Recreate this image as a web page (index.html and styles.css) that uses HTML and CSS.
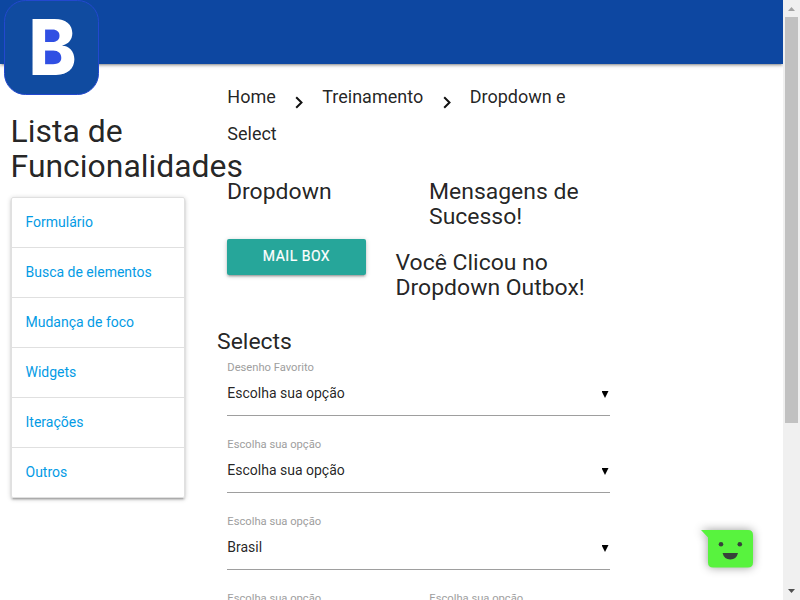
FILE: index.html
```
<!DOCTYPE html>
<html lang="pt-BR">
<head>
<meta charset="utf-8">
<title>Dropdown e Select</title>
<link rel="stylesheet" href="styles.css">
</head>
<body>
<div class="page">
  <nav class="navbar">
    <svg class="logo" width="104" height="100" viewBox="0 0 104 100">
      <rect x="4.500" y="0.500" width="94" height="94" rx="21" fill="#104ba0" stroke="#2348cf"/>
      <rect x="40" y="26" width="21" height="18" rx="6" fill="#304fe3"/>
      <rect x="40" y="48" width="24" height="19" rx="6" fill="#304fe3"/>
      <text class="logo-letter" transform="translate(28.600 75.300) scale(.94 1)">B</text>
    </svg>
  </nav>
  <div class="row">
    <aside class="side">
      <h4>Lista de Funcionalidades</h4>
      <ul class="collection">
        <li><a>Formulário</a></li>
        <li><a>Busca de elementos</a></li>
        <li><a>Mudança de foco</a></li>
        <li><a>Widgets</a></li>
        <li><a>Iterações</a></li>
        <li><a>Outros</a></li>
      </ul>
    </aside>
    <main class="content">
      <div class="crumbs"><a>Home</a><svg class="sep" width="9" height="13" viewBox="0 0 9 13"><path d="M1.2 1.2 6.5 6.5 1.2 11.8"/></svg><a>Treinamento</a><svg class="sep" width="9" height="13" viewBox="0 0 9 13"><path d="M1.2 1.2 6.5 6.5 1.2 11.8"/></svg><a>Dropdown e Select</a></div>
      <div class="demo">
        <div class="demo-left">
          <h5>Dropdown</h5>
          <a class="btn">Mail Box</a>
        </div>
        <div class="demo-right">
          <h5 class="success">Mensagens de Sucesso!</h5>
          <h5 class="result">Você Clicou no Dropdown Outbox!</h5>
        </div>
      </div>
      <h5 class="selects">Selects</h5>
      <div class="field"><label>Desenho Favorito</label><div class="select"><span>Escolha sua opção</span><i class="caret"></i></div></div>
      <div class="field"><label>Escolha sua opção</label><div class="select"><span>Escolha sua opção</span><i class="caret"></i></div></div>
      <div class="field"><label>Escolha sua opção</label><div class="select"><span>Brasil</span><i class="caret"></i></div></div>
      <div class="pair">
        <div class="field"><label>Escolha sua opção</label></div>
        <div class="field"><label>Escolha sua opção</label></div>
      </div>
    </main>
  </div>
  <svg class="chat" width="80" height="70" viewBox="0 0 80 70">
    <path d="M11 10H58Q63 10 63 15V42.500Q63 47.500 58 47.500H23Q18 47.500 18 42.500V17.500Z" fill="#58f33e"/>
    <circle cx="31" cy="24.300" r="2.300" fill="#37423a"/>
    <circle cx="49.800" cy="24.300" r="2.300" fill="#37423a"/>
    <path d="M32.600 33H48Q46.500 39.500 40.300 39.500T32.600 33Z" fill="#37423a"/>
  </svg>
</div>
<div class="scrollbar">
  <svg width="17" height="17" viewBox="0 0 17 17"><path d="M5 11 8.500 7 12 11Z" fill="#a3a3a3"/></svg>
  <div class="thumb"></div>
  <svg class="down" width="17" height="17" viewBox="0 0 17 17"><path d="M5 6H12L8.500 10Z" fill="#505050"/></svg>
</div>
</body>
</html>
```
FILE: styles.css
```
* { box-sizing: border-box; }
body {
  margin: 0;
  display: flex;
  width: 800px;
  height: 600px;
  overflow: hidden;
  background: #fff;
  color: rgba(0, 0, 0, .87);
  font: 14px/21px Roboto, sans-serif;
}
.page { position: relative; width: 783px; height: 600px; overflow: hidden; }
.navbar {
  height: 64px;
  background: #0d47a1;
  box-shadow: 0 2px 2px 0 rgba(0,0,0,.14), 0 3px 1px -2px rgba(0,0,0,.12), 0 1px 5px 0 rgba(0,0,0,.2);
}
.logo { display: block; position: relative; z-index: 1; overflow: visible; }
.logo-letter { font: 800 77px Inter, sans-serif; fill: #fff; }
.row { display: flex; padding-left: 11px; }
h4, h5 { margin: 0; font-weight: 400; line-height: 110%; }
h4 { font-size: 31.920px; margin-left: -.4px; }
h5 { font-size: 22.960px; }
.side { width: 174px; padding-top: 50px; }
.collection {
  list-style: none;
  margin: 13px 0 0;
  padding: 0;
  border: 1px solid #e0e0e0;
  border-radius: 2px;
  box-shadow: 0 2px 2px 0 rgba(0,0,0,.14), 0 3px 1px -2px rgba(0,0,0,.12), 0 1px 5px 0 rgba(0,0,0,.2);
}
.collection li { height: 50px; padding: 14px 13.500px; border-bottom: 1px solid #e0e0e0; color: #039be5; }
.collection li:last-child { height: 49px; border-bottom: 0; }
.content { width: 383px; margin-left: 42px; padding-top: 14px; }
.crumbs { height: 101px; padding-left: .3px; font-size: 18px; line-height: 37px; }
.sep { margin: 0 18px 0 19.500px; vertical-align: -6px; fill: none; stroke: #111; stroke-width: 2; }
.demo { display: flex; height: 150px; }
.demo-left { width: 168.500px; }
.btn {
  display: block;
  width: 139px;
  height: 36px;
  margin-top: 35px;
  border-radius: 2px;
  background: #26a69a;
  color: #fff;
  line-height: 34px;
  letter-spacing: .5px;
  text-align: center;
  text-transform: uppercase;
  -webkit-text-stroke: .2px #fff;
  box-shadow: 0 2px 2px 0 rgba(0,0,0,.14), 0 3px 1px -2px rgba(0,0,0,.12), 0 1px 5px 0 rgba(0,0,0,.2);
}
.demo-right { width: 214px; }
.success { padding-left: 33.500px; }
.result { margin-top: 20px; }
.selects { margin-left: -10px; height: 25px; }
.field { height: 77px; padding-top: 3px; }
.field label { display: block; height: 17px; padding-left: .3px; color: #9e9e9e; font-size: 11.200px; line-height: 21px; }
.select {
  display: flex;
  justify-content: space-between;
  height: 42px;
  padding-left: .3px;
  border-bottom: 1px solid #9e9e9e;
  line-height: 38px;
}
.caret {
  width: 7px;
  height: 7px;
  margin: 17px 1.500px 0 0;
  background: #000;
  clip-path: polygon(0 0, 100% 0, 50% 100%);
}
.pair { display: grid; grid-template-columns: 202px 1fr; }
.chat { position: absolute; left: 690px; top: 520px; filter: drop-shadow(0 0 5px rgba(0,0,0,.4)); }
.scrollbar { display: flex; flex-direction: column; width: 17px; height: 600px; background: #f0f0f0; }
.thumb { width: 13px; height: 406px; margin-left: 2px; background: #c1c1c1; }
.down { margin-top: auto; }
```
